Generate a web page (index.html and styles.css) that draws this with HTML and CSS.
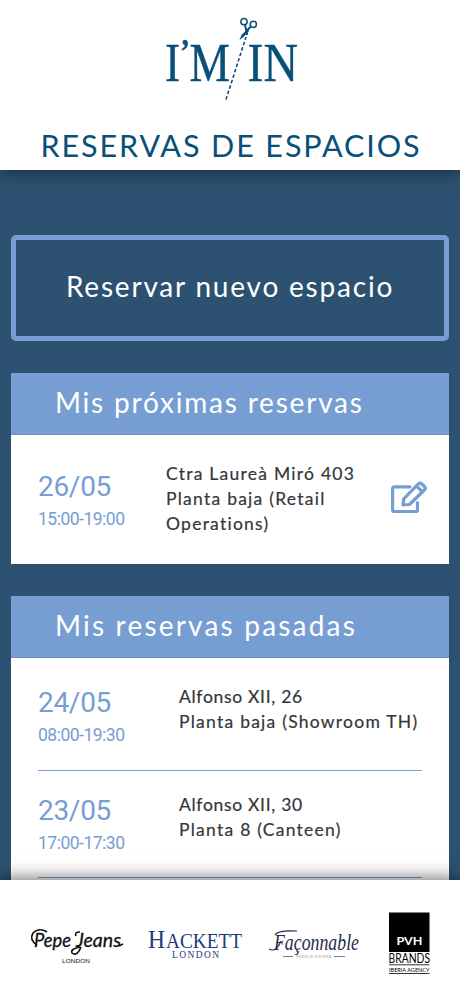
FILE: index.html
```html
<!DOCTYPE html>
<html lang="es">
<head>
  <meta charset="UTF-8" />
  <meta name="viewport" content="width=device-width, initial-scale=1.0" />
  <title>Reservas de espacios</title>
  <link rel="stylesheet" href="styles.css">
</head>
<body>
  <header class="header">
    <svg class="logo" width="160" height="90" viewBox="150 14 160 90" role="img" aria-label="I'M IN">
      <g class="logo-text">
        <text x="165" y="80.500" textLength="65" lengthAdjust="spacingAndGlyphs">I<tspan class="apostrophe" dy="-19">’</tspan><tspan dy="19">M</tspan></text>
        <text x="247.500" y="80.500" textLength="50.500" lengthAdjust="spacingAndGlyphs">IN</text>
      </g>
      <!-- tijeras -->
      <g fill="none" stroke="#085078">
        <path d="M226 99.500L246 37" stroke-width="1.600" stroke-dasharray="3.500 2.200" />
        <circle cx="244" cy="21.700" r="3.100" stroke-width="1.500" />
        <circle cx="253.300" cy="24.300" r="3.100" stroke-width="1.500" />
        <path d="M245 24.800L247.200 35M251 26.400L247 30.500" stroke-width="2" />
      </g>
      <path d="M248.500 28L241.500 35L239.500 40L243.500 37L249 31Z" fill="#085078" />
    </svg>
    <h1>RESERVAS DE ESPACIOS</h1>
  </header>

  <main class="content">
    <button class="new-booking" type="button">Reservar nuevo espacio</button>

    <section class="panel">
      <h2 class="next-title">Mis próximas reservas</h2>
      <div class="booking next">
        <div class="when">
          <div class="date">26/05</div>
          <div class="hours">15:00-19:00</div>
        </div>
        <div class="place">Ctra Laureà Miró 403<br>Planta baja (Retail<br>Operations)</div>
        <svg class="edit" width="38" height="34" viewBox="0 0 38 34" fill="none" stroke="#779ed3" stroke-width="3.200" stroke-linejoin="round" stroke-linecap="round">
          <path d="M20 6.800H4.500Q2.600 6.800 2.600 8.700V29.700Q2.600 31.500 4.500 31.500H25.500Q27.500 31.500 27.500 29.700V22.500" />
          <path d="M13 24.800L13.800 18.800L28.200 4Q30 2.200 31.800 4L34.400 6.500Q36.100 8.200 34.400 10L19.500 24.500Z" />
          <path d="M26.500 6L32 11.500" />
        </svg>
      </div>
    </section>

    <section class="panel past-panel">
      <h2 class="past-title">Mis reservas pasadas</h2>
      <div class="booking past">
        <div class="when">
          <div class="date">24/05</div>
          <div class="hours">08:00-19:30</div>
        </div>
        <div class="place"><span class="street">Alfonso XII, 26</span><br>Planta baja (Showroom TH)</div>
      </div>
      <div class="booking past">
        <div class="when">
          <div class="date">23/05</div>
          <div class="hours">17:00-17:30</div>
        </div>
        <div class="place"><span class="street">Alfonso XII, 30</span><br>Planta 8 (Canteen)</div>
      </div>
    </section>
  </main>

  <footer class="footer">
    <svg width="460" height="116" viewBox="0 880 460 116">
      <!-- Pepe Jeans -->
      <g fill="#111">
        <text class="pepe" x="34" y="947" textLength="37" lengthAdjust="spacingAndGlyphs">Pepe</text>
        <text class="pepe" x="76" y="947" textLength="45" lengthAdjust="spacingAndGlyphs">Jeans</text>
        <path d="M37 945Q29 940 33 933Q39 927 47 932M80 947Q70 949 72 953Q77 957 81 947M80 932Q74 932 76 936M119 946L123 944" fill="none" stroke="#111" stroke-width="1.600" />
        <text class="small" x="62" y="963" font-size="5" textLength="28" lengthAdjust="spacingAndGlyphs">LONDON</text>
      </g>
      <!-- Hackett -->
      <g class="hackett">
        <text x="148" y="947.500" font-size="25" textLength="17" lengthAdjust="spacingAndGlyphs">H</text>
        <text x="166" y="947.500" font-size="20" textLength="76" lengthAdjust="spacingAndGlyphs">ACKETT</text>
        <text x="172" y="957.800" font-size="9.500" textLength="47" lengthAdjust="spacing">LONDON</text>
      </g>
      <!-- Façonnable -->
      <g class="faconnable">
        <text x="274" y="950" font-size="23" textLength="85" lengthAdjust="spacingAndGlyphs">Façonnable</text>
        <path d="M275 935Q277 930 297 931M269 949Q276 953 281 941" fill="none" stroke="#252b49" stroke-width="1.200" />
        <path d="M283 956.500H293M334 956.500H345" stroke="#777c8c" />
        <text class="small" x="296" y="958" font-size="3.500" textLength="35" fill="#999">FRENCH RIVIERA</text>
      </g>
      <!-- PVH -->
      <rect x="389" y="912.500" width="40.500" height="39.500" fill="#000" />
      <text class="pvh" x="396.500" y="944.500" font-size="12" font-weight="700" fill="#fff" textLength="26" lengthAdjust="spacingAndGlyphs">PVH</text>
      <text class="pvh" x="388.500" y="962.700" font-size="12.500" textLength="41.500" lengthAdjust="spacingAndGlyphs">BRANDS</text>
      <text class="pvh" x="389" y="971.500" font-size="6.500" textLength="40.500" lengthAdjust="spacingAndGlyphs">IBERIA AGENCY</text>
      <path d="M389 964.800H429.500M389 973.500H429.500" stroke="#333" />
    </svg>
  </footer>
</body>
</html>
```
FILE: styles.css
```css
* { box-sizing: border-box; }
body {
  margin: 0;
  height: 996px;
  display: flex;
  flex-direction: column;
  overflow: hidden;
  background: #2d5271;
  font-family: Lato, "Open Sans", sans-serif;
}

.header {
  flex: none;
  height: 169.5px;
  padding-top: 14px;
  background: #fff;
  text-align: center;
  box-shadow: 0 2px 16px rgba(0, 0, 0, 0.5);
  z-index: 1;
}
.logo { display: block; margin-left: 150px; overflow: visible; }
.logo-text { font-family: "Liberation Serif", serif; font-size: 55px; fill: #085078; stroke: #085078; stroke-width: 0.4px; }
.apostrophe { font-size: 34px; font-weight: 700; }
h1 {
  margin: 20.5px 0 0;
  line-height: 40px;
  font-size: 30.5px;
  font-weight: 400;
  letter-spacing: 1.9px;
  text-indent: 2px;
  color: #085078;
  white-space: nowrap;
}

.content {
  flex: 1;
  min-height: 0;
  overflow: hidden;
  padding: 65.5px 11px 0;
}
.new-booking {
  display: block;
  width: 100%;
  height: 106px;
  padding: 0 0 5px;
  border: 5px solid #779ed3;
  border-radius: 5px;
  background: none;
  color: #fff;
  font: 400 28px Lato, sans-serif;
  letter-spacing: 1.8px;
}

.panel { margin-top: 32px; background: #fff; }
.past-panel { padding-bottom: 20px; }
h2 {
  margin: 0;
  height: 62px;
  padding-left: 44px;
  line-height: 58px;
  background: #779ed3;
  border-bottom: 1px solid #6a8fc2;
  color: #fff;
  font-size: 28px;
  font-weight: 400;
  letter-spacing: 1.8px;
}
.past-title { letter-spacing: 2.2px; }
.booking { display: flex; margin: 0 27px; }
.date, .hours { color: #779ed3; font-family: Roboto, sans-serif; }
.date { font-size: 28px; line-height: 38px; letter-spacing: -0.3px; }
.hours { font-size: 17.5px; line-height: 27px; letter-spacing: -0.5px; }
.place {
  color: #333739;
  font-size: 17.5px;
  line-height: 25px;
  letter-spacing: 1.25px;
  white-space: nowrap;
  -webkit-text-stroke: 0.2px #333739;
}
.street { letter-spacing: 0.7px; }

.next { height: 129px; margin-right: 21px; padding-top: 26px; }
.next .when { width: 128px; padding-top: 7px; }
.edit { margin: 19px 0 0 auto; }

.past { height: 107px; padding-top: 21px; border-bottom: 1px solid #779ed3; }
.panel h2 + .past { height: 112.5px; padding-top: 26px; }
.past .when { width: 141px; }

.footer {
  flex: none;
  height: 116px;
  background: #fff;
  box-shadow: 0 -2px 16px rgba(0, 0, 0, 0.55);
  z-index: 1;
}
.footer svg { display: block; }
.pepe { font-family: Lato, sans-serif; font-size: 20px; font-style: italic; stroke: #111; stroke-width: 0.3px; }
.small { font-family: "Liberation Sans", sans-serif; }
.hackett { font-family: "Liberation Serif", serif; fill: #243a7c; }
.faconnable { font-family: "Liberation Serif", serif; font-style: italic; fill: #252b49; }
.pvh { font-family: Lato, sans-serif; }
```
